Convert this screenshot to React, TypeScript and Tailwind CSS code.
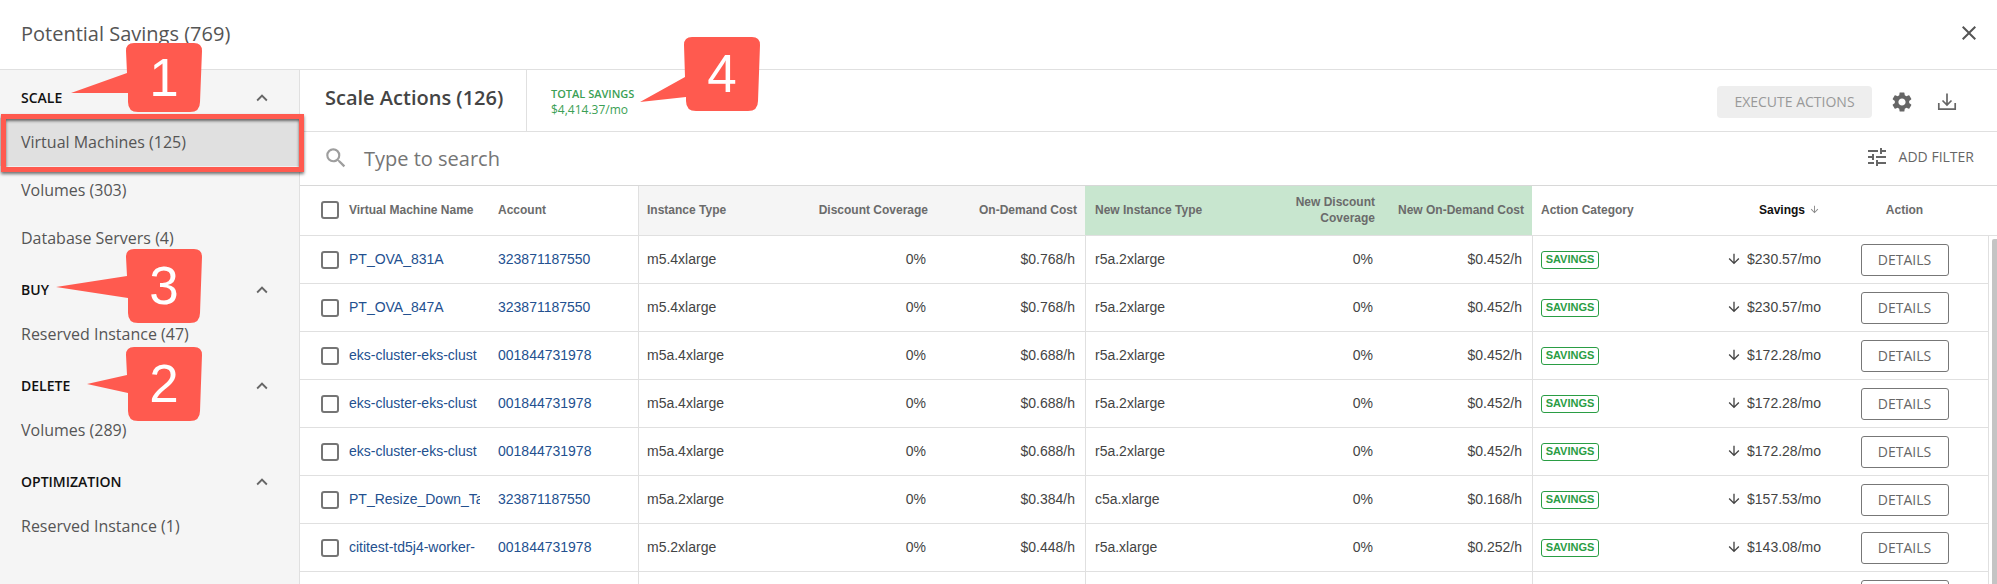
import { MdArrowDownward, MdClose, MdExpandLess, MdSearch, MdSettings, MdTune } from 'react-icons/md'
import { clsx } from 'clsx'

const sections = [
  { title: 'SCALE', items: ['Virtual Machines (125)', 'Volumes (303)', 'Database Servers (4)'] },
  { title: 'BUY', items: ['Reserved Instance (47)'] },
  { title: 'DELETE', items: ['Volumes (289)'] },
  { title: 'OPTIMIZATION', items: ['Reserved Instance (1)'] },
]

const rows = [
  ['PT_OVA_831A', '323871187550', 'm5.4xlarge', '$0.768/h', 'r5a.2xlarge', '$0.452/h', '$230.57/mo'],
  ['PT_OVA_847A', '323871187550', 'm5.4xlarge', '$0.768/h', 'r5a.2xlarge', '$0.452/h', '$230.57/mo'],
  ['eks-cluster-eks-clust', '001844731978', 'm5a.4xlarge', '$0.688/h', 'r5a.2xlarge', '$0.452/h', '$172.28/mo'],
  ['eks-cluster-eks-clust', '001844731978', 'm5a.4xlarge', '$0.688/h', 'r5a.2xlarge', '$0.452/h', '$172.28/mo'],
  ['eks-cluster-eks-clust', '001844731978', 'm5a.4xlarge', '$0.688/h', 'r5a.2xlarge', '$0.452/h', '$172.28/mo'],
  ['PT_Resize_Down_Ta', '323871187550', 'm5a.2xlarge', '$0.384/h', 'c5a.xlarge', '$0.168/h', '$157.53/mo'],
  ['cititest-td5j4-worker-', '001844731978', 'm5.2xlarge', '$0.448/h', 'r5a.xlarge', '$0.252/h', '$143.08/mo'],
  ['cititest-td5j4-worker-', '001844731978', 'm5.2xlarge', '$0.448/h', 'r5a.xlarge', '$0.252/h', '$143.08/mo'],
]

const gridCols = 'grid grid-cols-[189px_repeat(10,149px)]'

function Checkbox({ className }: { className?: string }) {
  return <span className={clsx('block w-[18px] h-[18px] rounded-[3px] border-2 border-[#757575] shrink-0', className)} />
}

// red annotation pasted on top of the screenshot, numbers are local to the body
function Callout(props: { n: string; className: string; h: number; y1: number; y2: number; tx: number; ty: number }) {
  const { n, className, h, y1, y2, tx, ty } = props
  const d = `M8 0 H68 Q76 0 76 8 L74 ${h - 10} Q74 ${h} 64 ${h} H12 Q2 ${h} 2 ${h - 10} L2 ${y2} L${tx} ${ty} L1 ${y1} L0 8 Q0 0 8 0 Z`
  return (
    <div className={clsx('absolute w-[76px]', className)}>
      <svg className="absolute inset-0 w-full h-full overflow-visible">
        <path d={d} fill="#ff5a4f" />
      </svg>
      <span className="absolute inset-0 flex items-center justify-center text-white text-[53px] font-['Liberation_Sans',sans-serif]">
        {n}
      </span>
    </div>
  )
}

function Sidebar() {
  return (
    <aside className="w-[300px] shrink-0 bg-[#f5f5f5] border-r border-[#e0e0e0] pt-2">
      {sections.map(section => (
        <div key={section.title} className="mb-2">
          <div className="h-10 flex items-center justify-between pl-[21px] pr-[26px]">
            <span className="text-sm font-semibold text-[#111]">{section.title}</span>
            <MdExpandLess className="text-[22px] text-[#666]" />
          </div>
          {section.items.map(item => (
            <div
              key={item}
              className={clsx(
                'h-12 flex items-center pl-[21px] text-base text-[#555]',
                item.startsWith('Virtual') && 'bg-[#e0e0e0]'
              )}
            >
              {item}
            </div>
          ))}
        </div>
      ))}
    </aside>
  )
}

function Toolbar() {
  return (
    <div className="h-[62px] flex items-center border-b border-[#e0e0e0] shrink-0">
      <div className="w-[227px] h-full flex items-center pl-[25px] pb-[5px] border-r border-[#e0e0e0] text-xl font-semibold text-[#444]">
        Scale Actions (126)
      </div>
      <div className="pl-6 pt-[2px] flex flex-col text-[#3b9f55]">
        <span className="text-[11px] leading-4 font-semibold">TOTAL SAVINGS</span>
        <span className="text-xs leading-4">$4,414.37/mo</span>
      </div>
      <div className="ml-auto flex items-center pr-[40px] pt-[2px]">
        <button className="w-[155px] h-8 rounded bg-[#eeeeee] text-sm text-[#999]">EXECUTE ACTIONS</button>
        <MdSettings className="ml-[18px] text-2xl text-[#666]" />
        <svg viewBox="0 0 20 20" className="ml-[23px] w-5 h-5" fill="none" stroke="#666" strokeWidth="1.7">
          <path d="M10 1.5V13M5.5 8.5 10 13l4.5-4.5M1.8 11v6.2h16.4V11" />
        </svg>
      </div>
    </div>
  )
}

function SearchBar() {
  return (
    <div className="h-[54px] flex items-center border-b border-[#d8d8d8] shrink-0">
      <MdSearch className="ml-[23px] mb-[2px] text-[26px] text-[#9e9e9e]" />
      <span className="ml-[15px] text-xl text-[#757575]">Type to search</span>
      <div className="ml-auto flex items-center pr-[23px] pb-[4px]">
        <MdTune className="text-2xl text-[#666]" />
        <span className="ml-[10px] text-sm font-medium text-[#666]">ADD FILTER</span>
      </div>
    </div>
  )
}

function TableHeader() {
  const th = 'h-full flex items-center px-2 pb-[2px] text-xs font-bold leading-4 text-[#6b6b6b]'
  return (
    <div className={clsx(gridCols, "h-[50px] border-b border-[#e0e0e0] shrink-0 font-['Liberation_Sans',sans-serif]")}>
      <div className={clsx(th, 'pl-[21px] gap-[10px] pr-0')}>
        <Checkbox />
        <span className="whitespace-nowrap">Virtual Machine Name</span>
      </div>
      <div className={clsx(th, 'pl-[9px]')}>Account</div>
      <div className={clsx(th, 'bg-[#f5f5f5] border-l border-[#e0e0e0]')}>Instance Type</div>
      <div className={clsx(th, 'bg-[#f5f5f5] justify-end')}>Discount Coverage</div>
      <div className={clsx(th, 'bg-[#f5f5f5] justify-end')}>On-Demand Cost</div>
      <div className={clsx(th, 'bg-[#c8e6cf] text-[#5f6f63] pl-[10px]')}>New Instance Type</div>
      <div className={clsx(th, 'bg-[#c8e6cf] text-[#5f6f63] justify-end text-right')}>New Discount<br />Coverage</div>
      <div className={clsx(th, 'bg-[#c8e6cf] text-[#5f6f63] justify-end whitespace-nowrap')}>New On-Demand Cost</div>
      <div className={clsx(th, 'pl-[9px]')}>Action Category</div>
      <div className={clsx(th, 'justify-end !text-[#111] gap-1 pr-[10px]')}>
        Savings
        <MdArrowDownward className="text-[11px] text-[#888]" />
      </div>
      <div className={clsx(th, 'justify-center')}>Action</div>
    </div>
  )
}

function TableRow({ row }: { row: string[] }) {
  const [name, account, type, cost, newType, newCost, savings] = row
  const td = 'h-full flex items-center px-2'
  // plain text cells sit a pixel above the centre line
  const text = 'pb-[2px]'
  return (
    <div className={clsx(gridCols, 'h-12 border-b border-[#e0e0e0] shrink-0 text-sm text-[#444]')}>
      <div className={clsx(td, 'pl-[21px] pr-0 gap-[10px] min-w-0')}>
        <Checkbox />
        <span className="w-[131px] overflow-hidden whitespace-nowrap pb-[2px] text-[#23508f]">{name}</span>
      </div>
      <div className={clsx(td, text, 'pl-[9px] text-[#23508f]')}>{account}</div>
      <div className={clsx(td, text, 'border-l border-[#e0e0e0]')}>{type}</div>
      <div className={clsx(td, text, 'justify-end pr-[10px]')}>0%</div>
      <div className={clsx(td, text, 'justify-end pr-[10px]')}>{cost}</div>
      <div className={clsx(td, text, 'border-l border-[#e0e0e0] pl-[9px]')}>{newType}</div>
      <div className={clsx(td, text, 'justify-end pr-[10px]')}>0%</div>
      <div className={clsx(td, text, 'justify-end pr-[10px]')}>{newCost}</div>
      <div className={clsx(td, 'border-l border-[#e0e0e0]')}>
        <span className="mt-px h-[18px] w-[58px] flex items-center justify-center rounded-[3px] border border-[#2a9d44] text-[11px] font-bold text-[#2a9d44]">
          SAVINGS
        </span>
      </div>
      <div className={clsx(td, text, 'justify-end pr-[9px] gap-[5px]')}>
        <MdArrowDownward className="text-base text-[#444]" />
        {savings}
      </div>
      <div className={clsx(td, 'justify-center')}>
        <button className="w-[88px] h-8 rounded-[3px] border border-[#777] bg-white text-sm text-[#666] font-['Open_Sans',sans-serif]">
          DETAILS
        </button>
      </div>
    </div>
  )
}

export default function App() {
  return (
    <div className="relative h-[584px] overflow-hidden bg-white flex flex-col font-['Open_Sans',sans-serif]">
      <header className="h-[70px] shrink-0 flex items-center justify-between pl-[21px] pr-[16px] pb-[2px] border-b border-[#e0e0e0]">
        <h1 className="text-xl text-[#555]">Potential Savings (769)</h1>
        <MdClose className="mb-[2px] text-2xl text-[#555]" />
      </header>

      <div className="flex-1 flex min-h-0">
        <Sidebar />
        <main className="flex-1 flex flex-col min-w-0">
          <Toolbar />
          <SearchBar />
          <TableHeader />
          <div className="flex-1 flex min-h-0">
            <div className="flex-1 flex flex-col min-w-0 font-['Liberation_Sans',sans-serif]">
              {rows.map((row, i) => (
                <TableRow key={i} row={row} />
              ))}
            </div>
            <div className="w-[9px] shrink-0 border-l border-[#e0e0e0] pl-[3px] pt-[3px]">
              <div className="h-full rounded-tl-[2px] bg-[#c4c4c4]" />
            </div>
          </div>
        </main>
      </div>

      {/* annotations */}
      <div className="absolute left-[1px] top-[114px] w-[303px] h-[58px] border-[5px] border-[#ff5a4f] shadow-[0_2px_3px_rgba(0,0,0,0.55),inset_0_2px_3px_rgba(0,0,0,0.55)]" />
      <Callout n="1" className="left-[126px] top-[43px] h-[69px]" h={69} y1={30} y2={50} tx={-55} ty={50} />
      <Callout n="3" className="left-[126px] top-[249px] h-[74px]" h={74} y1={27} y2={49} tx={-70} ty={38} />
      <Callout n="2" className="left-[126px] top-[347px] h-[74px]" h={74} y1={28} y2={46} tx={-39} ty={37} />
      <Callout n="4" className="left-[684px] top-[37px] h-[74px]" h={74} y1={40} y2={60} tx={-44} ty={65} />
    </div>
  )
}
